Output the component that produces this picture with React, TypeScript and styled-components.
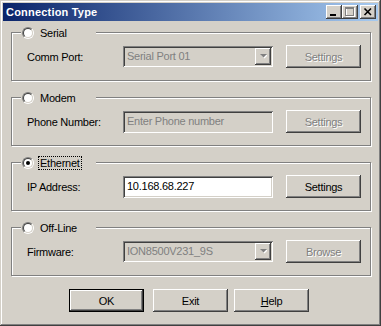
import styled, { createGlobalStyle, css } from "styled-components"

const FONT = `"Liberation Sans", Arial, sans-serif`

const GlobalStyle = createGlobalStyle`
    * { box-sizing: border-box; }
    body {
        margin: 0;
        background: #d4d0c8;
        font-family: ${FONT};
        font-size: 11px;
        letter-spacing: -0.25px;
    }
`

const raised = css`
    box-shadow: inset -1px -1px #404040, inset 1px 1px #ffffff,
        inset -2px -2px #808080, inset 2px 2px #d4d0c8;
`

const sunken = css`
    box-shadow: inset 1px 1px #808080, inset -1px -1px #ffffff,
        inset 2px 2px #404040, inset -2px -2px #d4d0c8;
`

type Conn = {
    name: string
    label: string
    checked?: boolean
    field: "combo" | "text"
    value: string
    placeholder?: boolean
    enabled?: boolean
    action: string
}

const connections: Conn[] = [
    { name: "Serial", label: "Comm Port:", field: "combo", value: "Serial Port 01", action: "Settings" },
    { name: "Modem", label: "Phone Number:", field: "text", value: "Enter Phone number", placeholder: true, action: "Settings" },
    { name: "Ethernet", label: "IP Address:", field: "text", value: "10.168.68.227", checked: true, enabled: true, action: "Settings" },
    { name: "Off-Line", label: "Firmware:", field: "combo", value: "ION8500V231_9S", action: "Browse" },
]

export default function App() {
    return (
        <>
            <GlobalStyle />
            <Window>
                <TitleBar>
                    <Title>Connection Type</Title>
                    <CaptionButton>
                        <svg width="16" height="14" viewBox="0 0 16 14">
                            <rect x="4" y="9" width="6" height="2" fill="#000" />
                        </svg>
                    </CaptionButton>
                    <CaptionButton>
                        <svg width="16" height="14" viewBox="0 0 16 14" shapeRendering="crispEdges">
                            <rect x="4.5" y="3.5" width="8" height="8" fill="none" stroke="#fff" />
                            <rect x="3.5" y="2.5" width="8" height="8" fill="none" stroke="#808080" />
                            <rect x="4" y="3" width="7" height="1" fill="#808080" />
                        </svg>
                    </CaptionButton>
                    <CaptionButton $gap>
                        <svg width="16" height="14" viewBox="0 0 16 14">
                            <path d="M4.5 3.5 L11 10 M11 3.5 L4.5 10" stroke="#000" strokeWidth="1.6" />
                        </svg>
                    </CaptionButton>
                </TitleBar>

                <Content>
                    {connections.map((c) => (
                        <Group key={c.name}>
                            <Legend>
                                <Radio $checked={c.checked} />
                                <RadioLabel $focused={c.checked}>{c.name}</RadioLabel>
                            </Legend>
                            <Row>
                                <FieldLabel>{c.label}</FieldLabel>
                                {c.field === "combo" ? (
                                    <Combo>
                                        <ComboText>{c.value}</ComboText>
                                        <DropButton>
                                            <svg width="7" height="5" viewBox="0 0 7 5">
                                                <path d="M1 1 H8 L4.5 4.5 Z" fill="#fff" />
                                                <path d="M0 0 H7 L3.5 3.5 Z" fill="#808080" />
                                            </svg>
                                        </DropButton>
                                    </Combo>
                                ) : (
                                    <TextBox $enabled={c.enabled} $placeholder={c.placeholder}>
                                        {c.value}
                                    </TextBox>
                                )}
                                <Button disabled={!c.enabled}>{c.action}</Button>
                            </Row>
                        </Group>
                    ))}
                </Content>

                <ButtonRow>
                    <Button $default>OK</Button>
                    <Button>Exit</Button>
                    <Button>
                        <u>H</u>elp
                    </Button>
                </ButtonRow>
            </Window>
        </>
    )
}

const Window = styled.div`
    width: 381px;
    height: 326px;
    padding: 3px;
    background: #d4d0c8;
    box-shadow: inset -1px -1px #404040, inset 1px 1px #d4d0c8,
        inset -2px -2px #808080, inset 2px 2px #ffffff;
    display: flex;
    flex-direction: column;
`

const TitleBar = styled.div`
    height: 18px;
    display: flex;
    align-items: center;
    padding: 0 2px 0 3px;
    background: linear-gradient(to right, #0a246a, #a6caf0);
`

const Title = styled.div`
    flex: 1;
    color: #ffffff;
    font-weight: bold;
    font-size: 11px;
    letter-spacing: 0.2px;
`

const CaptionButton = styled.div<{ $gap?: boolean }>`
    width: 16px;
    height: 14px;
    margin-left: ${(p) => (p.$gap ? "2px" : "0")};
    background: #d4d0c8;
    ${raised}
    display: flex;
`

const Content = styled.div`
    display: flex;
    flex-direction: column;
    gap: 16px;
    padding: 11px 7px 0 8px;
`

const Group = styled.div`
    position: relative;
    height: 49px;
    border: 1px solid #808080;
    box-shadow: inset 1px 1px #ffffff, 1px 1px #ffffff;
    padding: 12px 0 0 15px;
`

const Legend = styled.div`
    position: absolute;
    top: -7px;
    left: 9px;
    width: 75px;
    height: 14px;
    padding-left: 1px;
    display: flex;
    align-items: center;
    gap: 4px;
    background: #d4d0c8;
`

const Radio = styled.span<{ $checked?: boolean }>`
    position: relative;
    flex: none;
    width: 12px;
    height: 12px;
    border-radius: 50%;
    border: 1px solid;
    border-color: #808080 #ffffff #ffffff #808080;

    &::before {
        content: "";
        position: absolute;
        inset: 0;
        border-radius: 50%;
        border: 1px solid;
        border-color: #404040 #d4d0c8 #d4d0c8 #404040;
        background: #ffffff;
    }

    &::after {
        content: "";
        display: ${(p) => (p.$checked ? "block" : "none")};
        position: absolute;
        left: 3px;
        top: 3px;
        width: 4px;
        height: 4px;
        border-radius: 50%;
        background: #000000;
    }
`

const RadioLabel = styled.span<{ $focused?: boolean }>`
    padding: 0 1px;
    line-height: 12px;
    border: 1px dotted ${(p) => (p.$focused ? "#000000" : "transparent")};
    color: #000000;
`

const Row = styled.div`
    display: flex;
    align-items: center;
    height: 23px;
`

const FieldLabel = styled.div`
    width: 96px;
    color: #000000;
`

const Combo = styled.div`
    width: 150px;
    height: 21px;
    padding: 2px;
    display: flex;
    background: #d4d0c8;
    ${sunken}
`

const ComboText = styled.div`
    flex: 1;
    padding-left: 2px;
    line-height: 17px;
    color: #808080;
`

const DropButton = styled.div`
    width: 16px;
    height: 17px;
    display: flex;
    align-items: center;
    justify-content: center;
    ${raised}
`

const TextBox = styled.div<{ $enabled?: boolean; $placeholder?: boolean }>`
    width: 150px;
    height: 22px;
    padding: 0 4px;
    line-height: 20px;
    background: ${(p) => (p.$enabled ? "#ffffff" : "#d4d0c8")};
    color: ${(p) => (p.$placeholder ? "#808080" : "#000000")};
    ${sunken}
`

const Button = styled.button<{ $default?: boolean }>`
    width: 75px;
    height: 23px;
    margin-left: 13px;
    padding: 0;
    border: none;
    background: #d4d0c8;
    font-family: ${FONT};
    font-size: 11px;
    letter-spacing: -0.25px;
    color: #000000;
    ${raised}

    &:disabled {
        color: #808080;
        text-shadow: 1px 1px 0 #ffffff;
    }

    ${(p) =>
        p.$default &&
        css`
            border: 1px solid #000000;
            margin-right: 3px;
        `}
`

const ButtonRow = styled.div`
    display: flex;
    gap: 6px;
    padding: 13px 0 0 66px;

    & > ${Button} {
        margin-left: 0;
    }
`
